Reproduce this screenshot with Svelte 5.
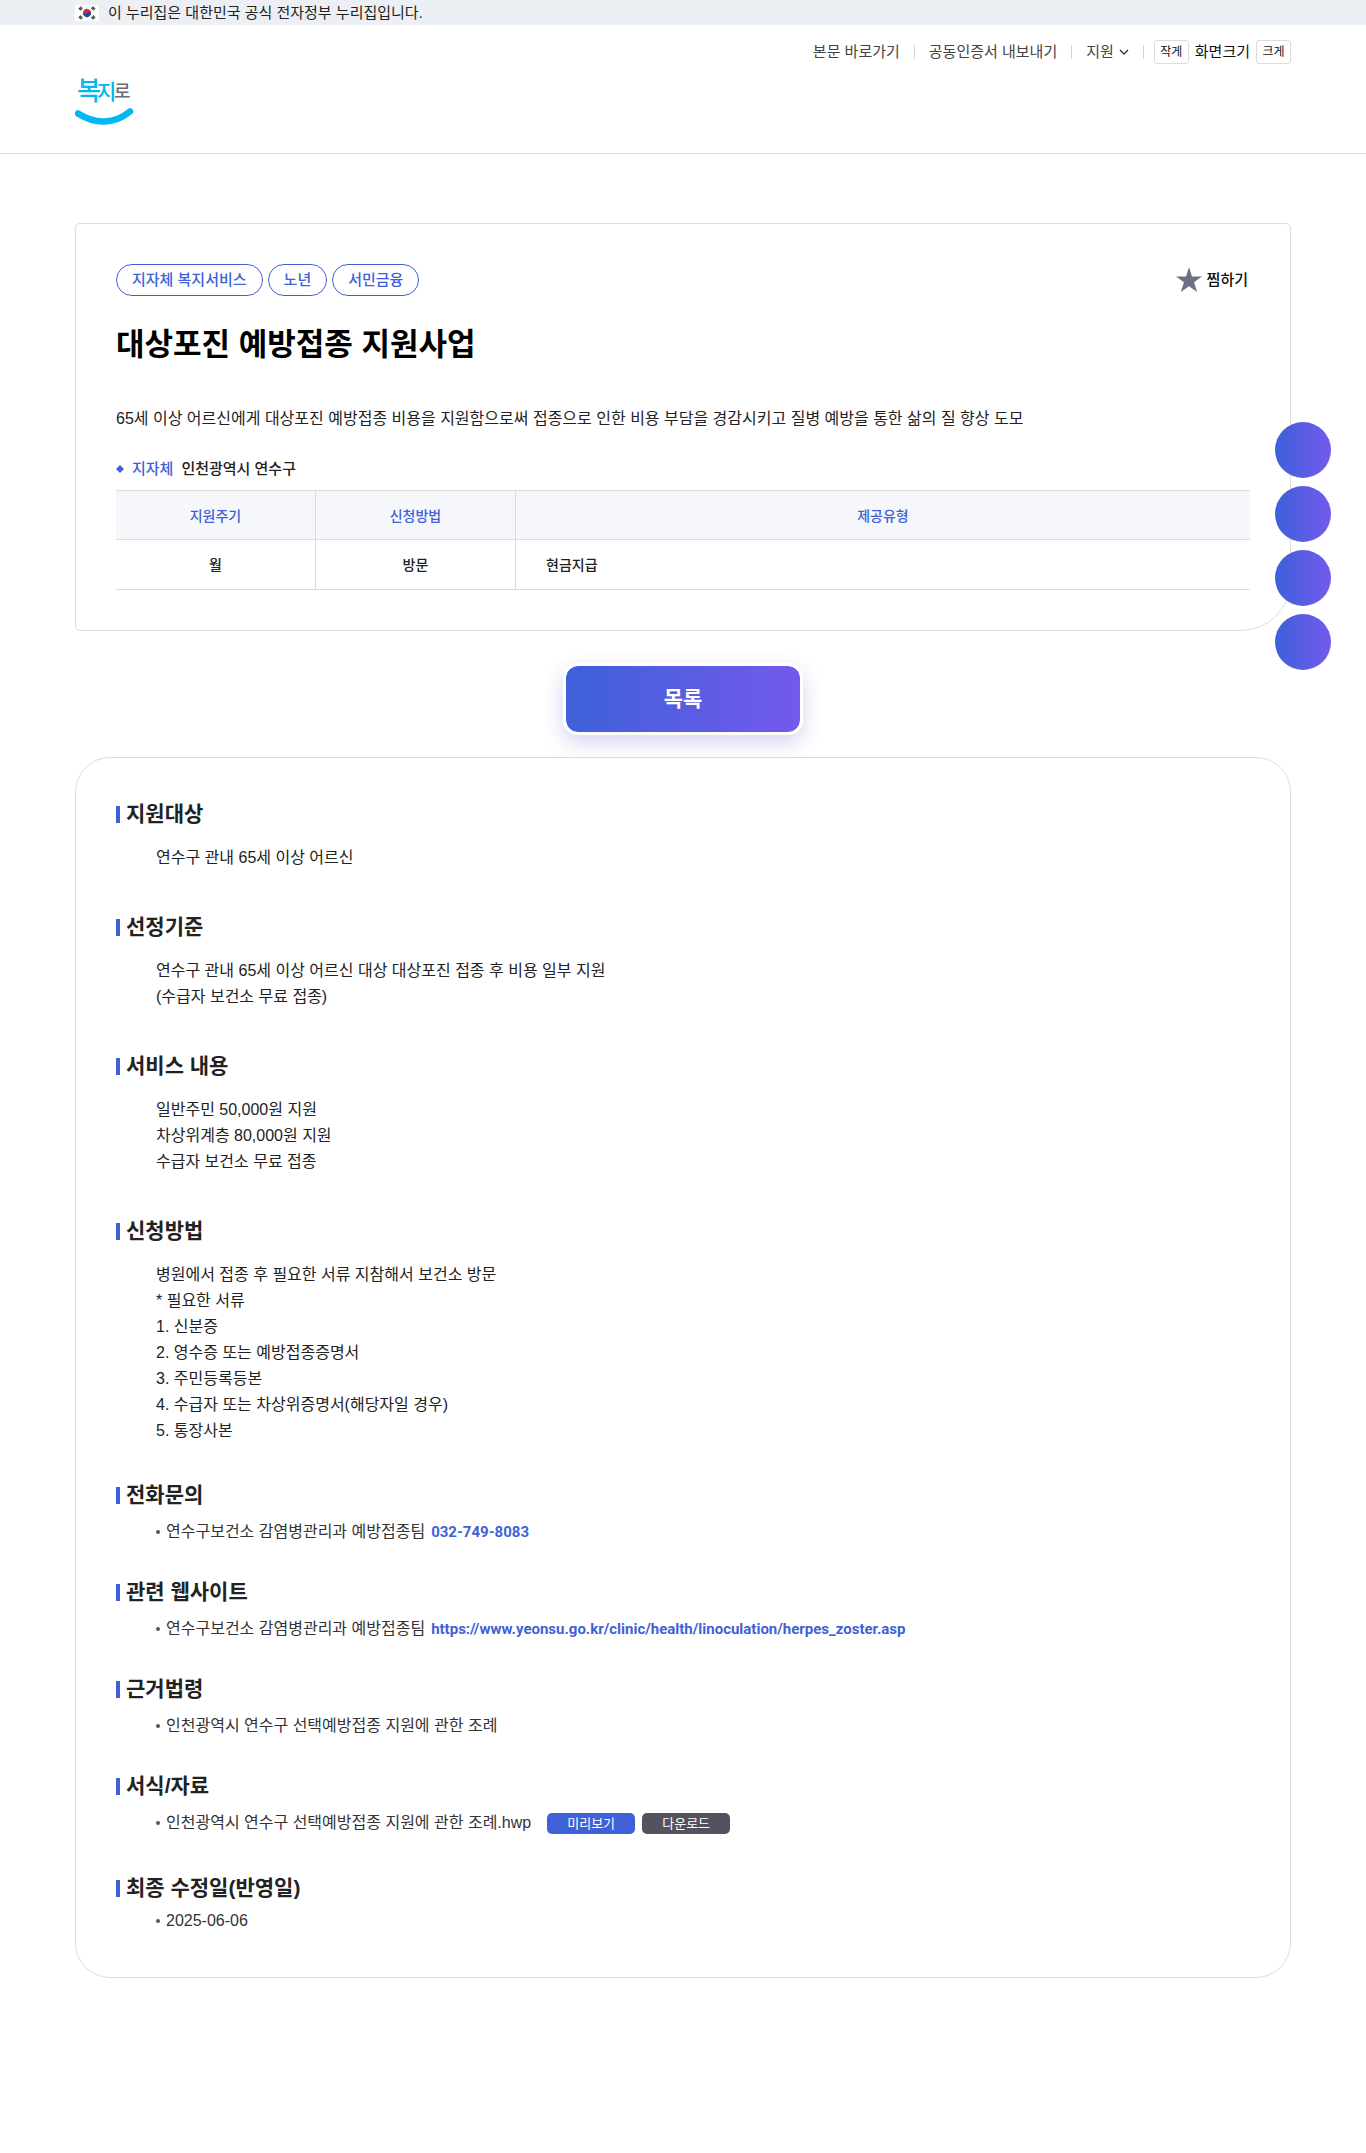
<script>
  const chips = ['지자체 복지서비스', '노년', '서민금융'];
  const details = [
    { title: '지원대상', lines: ['연수구 관내 65세 이상 어르신'] },
    {
      title: '선정기준',
      lines: ['연수구 관내 65세 이상 어르신 대상 대상포진 접종 후 비용 일부 지원', '(수급자 보건소 무료 접종)'],
    },
    {
      title: '서비스 내용',
      lines: ['일반주민 50,000원 지원', '차상위계층 80,000원 지원', '수급자 보건소 무료 접종'],
    },
    {
      title: '신청방법',
      lines: [
        '병원에서 접종 후 필요한 서류 지참해서 보건소 방문',
        '* 필요한 서류',
        '1. 신분증',
        '2. 영수증 또는 예방접종증명서',
        '3. 주민등록등본',
        '4. 수급자 또는 차상위증명서(해당자일 경우)',
        '5. 통장사본',
      ],
    },
  ];
  const site = 'https://www.yeonsu.go.kr/clinic/health/linoculation/herpes_zoster.asp';
  const quickButtons = ['퀵메뉴 1', '퀵메뉴 2', '퀵메뉴 3', '퀵메뉴 4'];
</script>

<div class="gov">
  <div class="wrap gov-inner">
    <svg class="flag" viewBox="0 0 24 16" aria-hidden="true">
      <rect width="24" height="16" fill="#fff" />
      <g transform="rotate(25 12 8)">
        <path d="M8 8a4 4 0 0 1 8 0z" fill="#d0313f" />
        <path d="M8 8a4 4 0 0 0 8 0z" fill="#1b4a9c" />
        <circle cx="10" cy="8" r="2" fill="#d0313f" />
        <circle cx="14" cy="8" r="2" fill="#1b4a9c" />
      </g>
      <g stroke="#2b2b2b" stroke-width="3" stroke-dasharray="1 0.3">
        <path d="M4.4 4.6 7 2.4M17 2.4l2.6 2.2M4.4 11.4 7 13.6M17 13.6l2.6-2.2" />
      </g>
    </svg>
    <span>이 누리집은 대한민국 공식 전자정부 누리집입니다.</span>
  </div>
</div>

<header>
  <div class="wrap header-inner">
    <a class="logo" href="#home" aria-label="복지로 홈">
      <svg viewBox="0 0 60 68" aria-hidden="true">
        <text class="logo-a" x="2" y="43">복</text>
        <text class="logo-b" x="22" y="42">지</text>
        <text class="logo-c" x="39" y="41">로</text>
        <path d="M3 56.500C20 67.500 39 67.500 55 54.500" fill="none" stroke="#00b9f1" stroke-width="6.500" stroke-linecap="round" />
      </svg>
    </a>
    <nav class="util">
      <a href="#content">본문 바로가기</a>
      <i class="sep"></i>
      <a href="#cert">공동인증서 내보내기</a>
      <i class="sep"></i>
      <button class="support" type="button">
        지원
        <svg viewBox="0 0 10 8" aria-hidden="true"><path d="m1 2 4 4 4-4" fill="none" stroke="#333" stroke-width="1.4" /></svg>
      </button>
      <i class="sep last"></i>
      <div class="zoom">
        <button type="button">작게</button>
        <span>화면크기</span>
        <button type="button">크게</button>
      </div>
    </nav>
  </div>
</header>

<main class="wrap" id="content">
  <section class="summary">
    <div class="top">
      <div class="chips">
        {#each chips as chip}<span class="chip">{chip}</span>{/each}
      </div>
      <button class="pick" type="button">
        <svg viewBox="0 0 26 26" aria-hidden="true"><path d="m13 0 3 9.500h10l-8 5.700 3.200 9.800-8.200-5.800L4.800 25 8 15.200 0 9.500h10z" fill="#6d7083" /></svg>
        찜하기
      </button>
    </div>
    <h1>대상포진 예방접종 지원사업</h1>
    <p class="desc">65세 이상 어르신에게 대상포진 예방접종 비용을 지원함으로써 접종으로 인한 비용 부담을 경감시키고 질병 예방을 통한 삶의 질 향상 도모</p>
    <p class="region">
      <svg viewBox="0 0 8 8" aria-hidden="true"><path d="m4 0 4 4-4 4-4-4z" fill="#3f61d7" /></svg>
      <strong>지자체</strong>
      <span>인천광역시 연수구</span>
    </p>
    <table>
      <thead>
        <tr><th class="narrow" scope="col">지원주기</th><th class="narrow" scope="col">신청방법</th><th scope="col">제공유형</th></tr>
      </thead>
      <tbody>
        <tr><td>월</td><td>방문</td><td class="kind">현금지급</td></tr>
      </tbody>
    </table>
  </section>

  <a class="list" href="#list">목록</a>

  <section class="detail">
    {#each details as block}
      <article>
        <h2>{block.title}</h2>
        <div class="lines">
          {#each block.lines as line}<p>{line}</p>{/each}
        </div>
      </article>
    {/each}
    <article class="compact phone">
      <h2>전화문의</h2>
      <ul><li><span>연수구보건소 감염병관리과 예방접종팀</span><a href="tel:032-749-8083">032-749-8083</a></li></ul>
    </article>
    <article class="compact">
      <h2>관련 웹사이트</h2>
      <ul><li><span>연수구보건소 감염병관리과 예방접종팀</span><a href="#site">{site}</a></li></ul>
    </article>
    <article class="compact">
      <h2>근거법령</h2>
      <ul><li><span>인천광역시 연수구 선택예방접종 지원에 관한 조례</span></li></ul>
    </article>
    <article class="compact">
      <h2>서식/자료</h2>
      <ul>
        <li>
          <span>인천광역시 연수구 선택예방접종 지원에 관한 조례.hwp</span>
          <div class="actions">
            <button class="preview" type="button">미리보기</button>
            <button class="download" type="button">다운로드</button>
          </div>
        </li>
      </ul>
    </article>
    <article class="compact updated">
      <h2>최종 수정일(반영일)</h2>
      <ul><li><span>2025-06-06</span></li></ul>
    </article>
  </section>
</main>

<aside class="quick">
  {#each quickButtons as label}<button type="button" aria-label={label}></button>{/each}
</aside>

<style>
  :global(body) {
    margin: 0;
    background: #fff;
    color: #222;
    font: 16px/26px 'Liberation Sans', 'Noto Sans CJK KR', sans-serif;
  }
  h1, h2, p, ul { margin: 0; padding: 0; }
  button { font-family: inherit; color: inherit; padding: 0; border: 0; background: none; cursor: pointer; }
  a { color: inherit; text-decoration: none; }
  svg { display: block; flex: none; }
  .wrap { max-width: 1216px; margin: 0 auto; }

  .gov { background: #ecf0f5; font-size: 15px; line-height: 25px; }
  .gov-inner { display: flex; align-items: center; gap: 9px; }
  .flag { width: 24px; height: 16px; }

  header { border-bottom: 1px solid #dcdcdc; }
  .header-inner { display: flex; justify-content: space-between; align-items: flex-start; height: 128px; }
  .logo { margin-top: 32px; }
  .logo svg { width: 60px; height: 68px; }
  .logo text { font-family: 'Noto Sans CJK KR', sans-serif; font-weight: 500; fill: #00b9f1; }
  .logo .logo-a { font-size: 26px; }
  .logo .logo-b { font-size: 21px; }
  .logo .logo-c { font-size: 18px; fill: #6b6c70; }

  .util { display: flex; align-items: center; margin-top: 15px; font-size: 15px; line-height: 24px; color: #444; }
  .sep { width: 1px; height: 14px; margin: 0 14px; background: #d4d4d4; }
  .sep.last { margin-right: 10px; }
  .support { display: flex; align-items: center; gap: 5px; font-size: 15px; line-height: 24px; }
  .support svg { width: 10px; height: 8px; }
  .zoom { display: flex; align-items: center; gap: 6px; color: #111; }
  .zoom button { box-sizing: border-box; width: 35px; height: 24px; border: 1px solid #dcdcdc; border-radius: 3px; font-size: 12px; line-height: 20px; }

  main { padding: 69px 0 174px; }
  .summary { padding: 40px; border: 1px solid #dcdcdc; border-radius: 5px 5px 50px 5px; }
  .top { display: flex; justify-content: space-between; align-items: center; }
  .chips { display: flex; gap: 5px; }
  .chip { padding: 0 15px; border: 1px solid #3f61d7; border-radius: 16px; color: #3f61d7; font-size: 15px; font-weight: 500; line-height: 30px; }
  .pick { display: flex; align-items: center; gap: 5px; padding-right: 2px; font-size: 15px; font-weight: 500; line-height: 32px; color: #111; }
  .pick svg { width: 26px; height: 26px; }
  h1 { margin-top: 25px; font-size: 31px; line-height: 48px; color: #000; }
  .desc { margin-top: 37px; }
  .region { display: flex; align-items: center; gap: 8px; margin-top: 24px; font-size: 15px; font-weight: 500; }
  .region svg { width: 8px; height: 8px; }
  .region strong { color: #3f61d7; font-weight: 500; }
  table { width: 100%; margin-top: 8px; border-collapse: collapse; table-layout: fixed; font-size: 14px; font-weight: 500; line-height: 20px; }
  th, td { padding: 15px 0 14px; border: 1px solid #dcdcdc; text-align: center; }
  th { padding-bottom: 13px; background: #f5f7fb; color: #3f61d7; font-weight: 500; }
  tr > :first-child { border-left: 0; }
  tr > :last-child { border-right: 0; }
  .narrow { width: 199px; }
  td.kind { padding-left: 30px; text-align: left; }

  .list { box-sizing: border-box; display: block; width: 240px; margin: 32px auto 22px; border: 3px solid #fff; border-radius: 15px; background: linear-gradient(90deg, #3d61d8, #7459ec) padding-box; box-shadow: 0 8px 20px rgba(63, 61, 190, 0.22); color: #fff; font-size: 21px; font-weight: 700; line-height: 66px; text-align: center; }

  .detail { position: relative; display: flex; flex-direction: column; gap: 43px; padding: 43px 40px; border: 1px solid #dcdcdc; border-radius: 35px; background: #fff; }
  h2 { display: flex; align-items: center; gap: 6px; font-size: 21px; line-height: 26px; }
  h2::before { content: ''; width: 4px; height: 17px; background: #3f61d7; }
  .lines { margin: 18px 0 0 40px; }
  .compact { margin-top: -9px; }
  .compact ul { margin: 11px 0 0 40px; list-style: none; }
  .compact li { display: flex; align-items: center; gap: 6px; color: #333; }
  .compact li::before { content: ''; width: 4px; height: 4px; border-radius: 50%; background: #555; }
  .compact li a { color: #3f61d7; font-family: Roboto, sans-serif; font-size: 15px; font-weight: 700; }
  .actions { display: flex; gap: 7px; margin-left: 10px; }
  .actions button { width: 88px; border-radius: 5px; color: #fff; font-size: 13px; line-height: 21px; }
  .preview { background: #3f61d7; }
  .download { background: #53525f; }
  .phone { margin-top: -5px; }
  .updated { margin-top: -4px; }
  .updated ul { margin-top: 7px; }

  .quick { position: fixed; top: 422px; right: 35px; display: flex; flex-direction: column; gap: 8px; }
  .quick button { width: 56px; height: 56px; border-radius: 50%; background: linear-gradient(90deg, #3d61d8, #7459ec); }
</style>
